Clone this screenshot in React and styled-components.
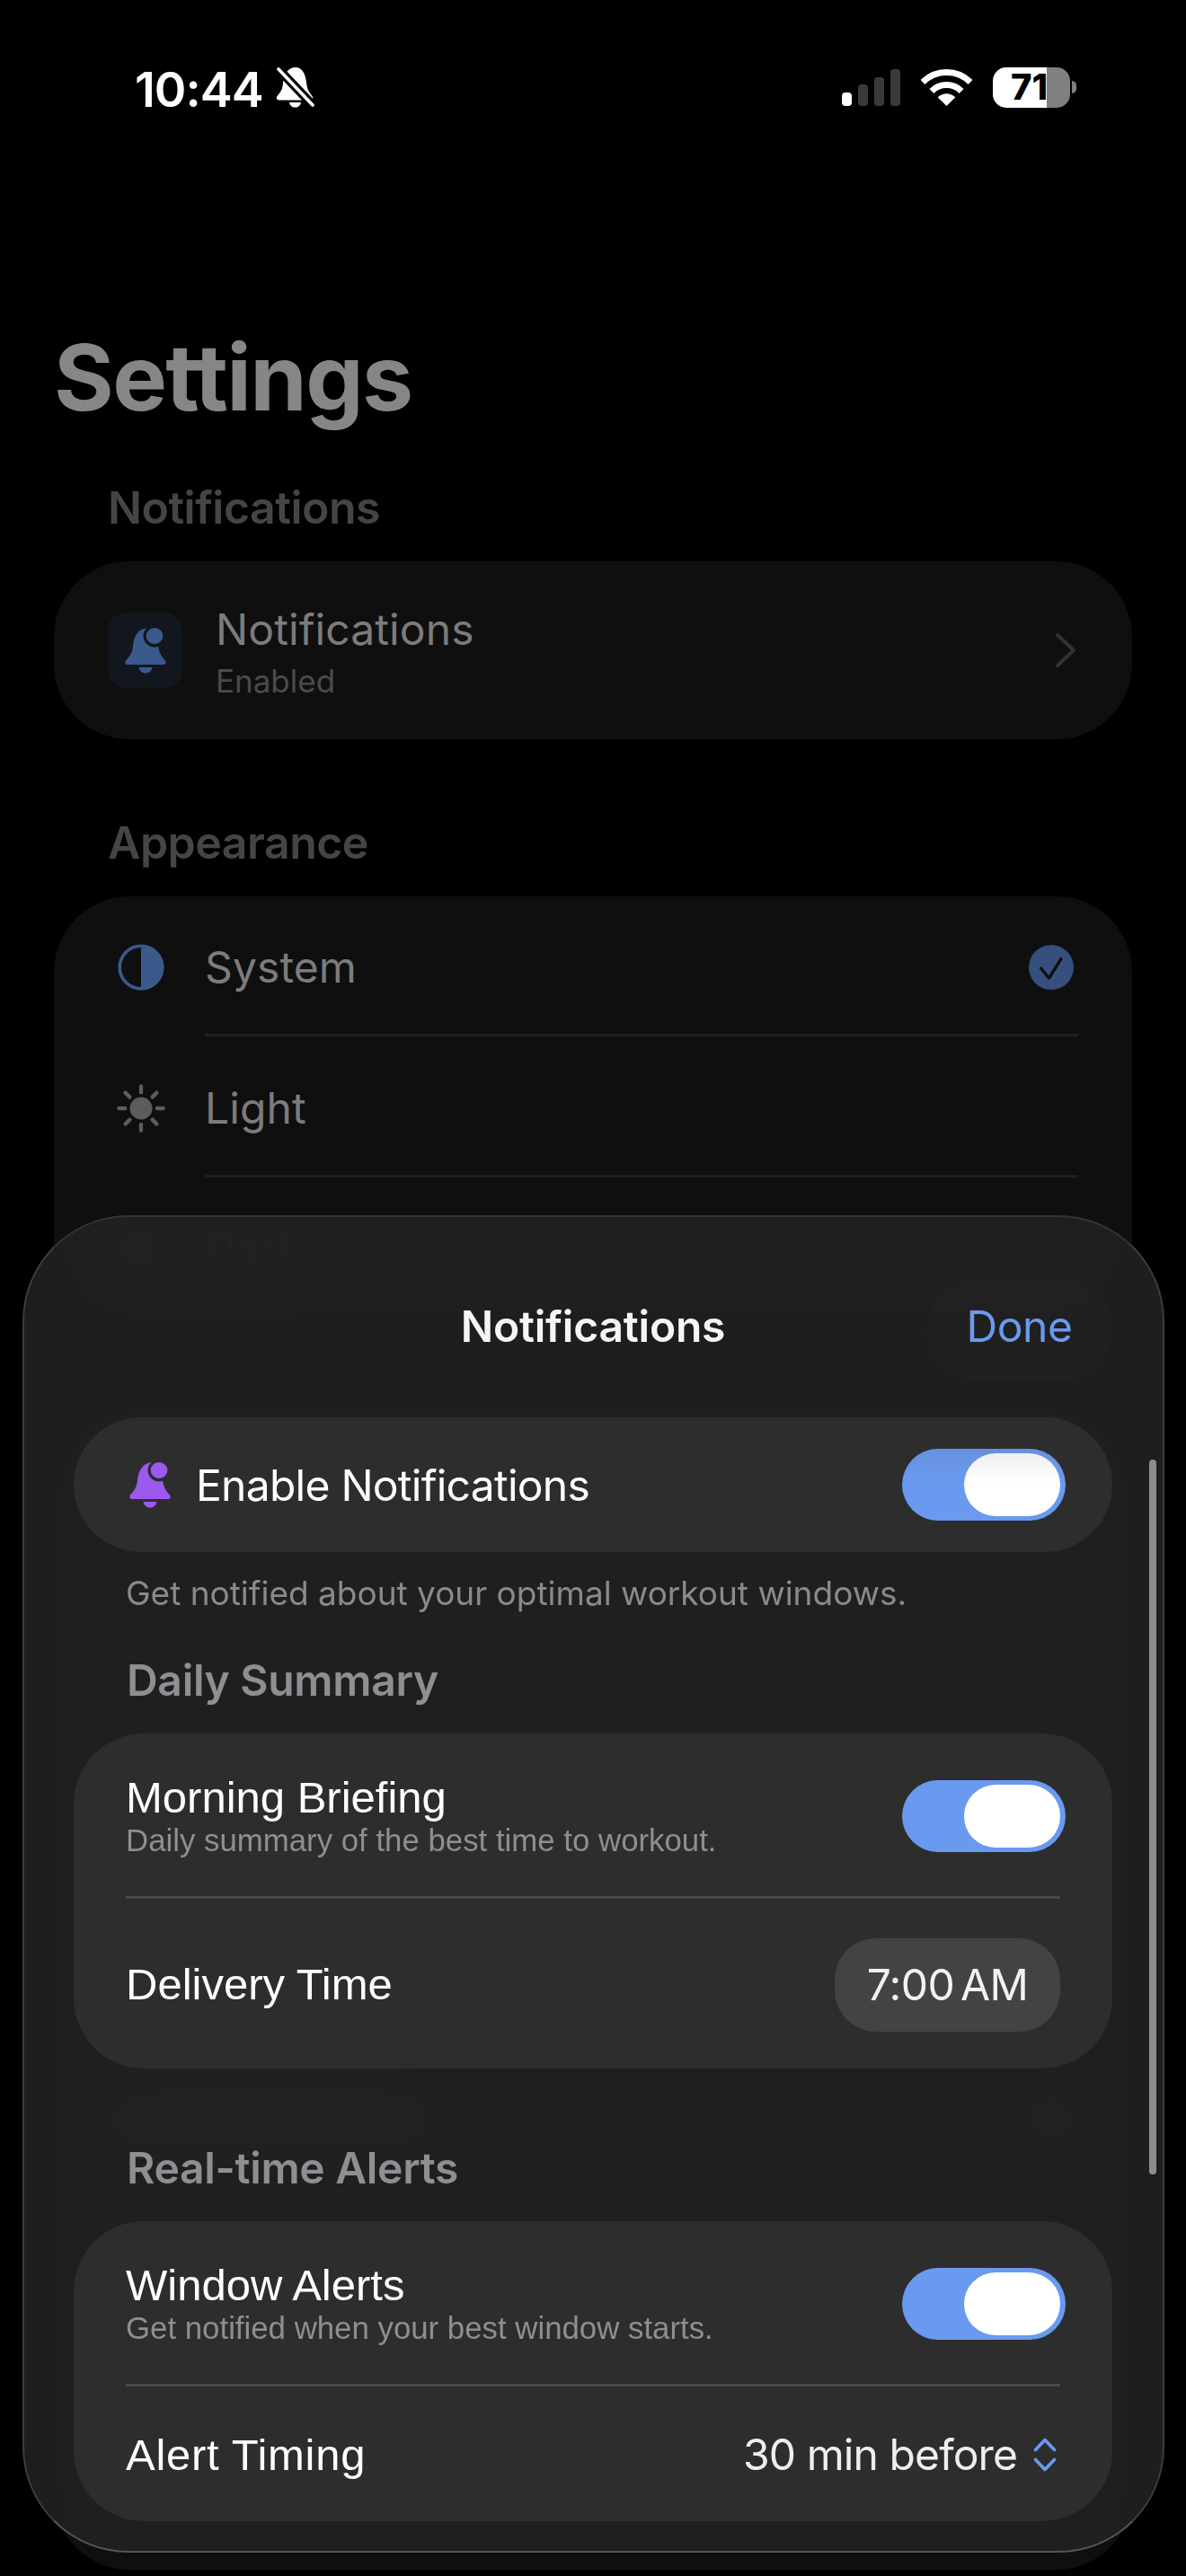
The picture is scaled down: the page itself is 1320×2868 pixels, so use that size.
import React from "react";
import styled, { createGlobalStyle } from "styled-components";

const Global = createGlobalStyle`
  html, body { margin: 0; padding: 0; background: #000; }
  * { box-sizing: border-box; }
  body { font-family: Inter, "Noto Sans", sans-serif; }
`;

const Page = styled.div`
  position: relative;
  width: 1320px;
  height: 2868px;
  overflow: hidden;
  background: #000;
  padding-top: 74px;
`;

const StatusBar = styled.div`
  display: flex;
  justify-content: space-between;
  align-items: center;
  height: 46px;
  padding: 0 122px 0 150px;
`;
const StatusLeft = styled.div`
  display: flex;
  align-items: center;
  gap: 14px;
`;
const Clock = styled.span`
  color: #fff;
  font: 600 54px/1 Inter, sans-serif;
  letter-spacing: -1px;
  margin-top: 5px;
`;
const StatusRight = styled.div`
  display: flex;
  align-items: center;
  gap: 23px;
`;
const Signal = styled.div`
  display: flex;
  align-items: flex-end;
  gap: 7px;
  height: 41px;
`;
const SignalBar = styled.span`
  width: 11px;
  height: ${(p) => p.$h}px;
  border-radius: 4px;
  background: ${(p) => (p.$on ? "#fff" : "#3a3a3a")};
`;
const BatteryWrap = styled.div`
  display: flex;
  align-items: center;
  gap: 2px;
`;
const Battery = styled.div`
  width: 86px;
  height: 45px;
  border-radius: 15px;
  background: linear-gradient(90deg, #fff 70%, #808080 70%);
  display: flex;
  align-items: center;
  justify-content: center;
  color: #000;
  font: 800 40px/1 Inter, sans-serif;
  padding-right: 5px;
`;
const BatteryNub = styled.span`
  width: 5px;
  height: 14px;
  border-radius: 0 6px 6px 0;
  background: #808080;
`;

const LargeTitle = styled.h1`
  margin: 249px 0 0 60px;
  color: #868686;
  font: 700 102px/1 Inter, sans-serif;
  letter-spacing: -1.6px;
`;
const BackSectionTitle = styled.h2`
  margin: ${(p) => p.$top}px 0 35px 120px;
  color: #454545;
  font: 600 50px/1 Inter, sans-serif;
  letter-spacing: -0.5px;
`;
const BackCard = styled.div`
  margin: 0 60px;
  background: #0f0f0f;
  border-radius: 84px;
`;
const NotifRow = styled.div`
  display: flex;
  align-items: center;
  height: 198px;
  padding: 0 62px 0 60px;
`;
const IconTile = styled.div`
  width: 83px;
  height: 84px;
  border-radius: 20px;
  background: #12161d;
  display: flex;
  align-items: center;
  justify-content: center;
`;
const NotifText = styled.div`
  flex: 1;
  margin-left: 37px;
  padding-top: 4px;
  display: flex;
  flex-direction: column;
  gap: 16px;
`;
const BackLabel = styled.div`
  color: #7c7c7c;
  font: 400 48px/1 Inter, sans-serif;
  letter-spacing: 0.1px;
`;
const BackSub = styled.div`
  color: #4b4b4b;
  font: 400 35px/1 Inter, sans-serif;
`;
const OptionList = styled.div`
  padding-top: 4px;
  padding-bottom: 6px;
`;
const OptionRow = styled.div`
  display: flex;
  align-items: center;
  height: 149px;
  padding-left: 70px;
  padding-right: 65px;
`;
const OptionIcon = styled.div`
  width: 54px;
  display: flex;
  justify-content: center;
`;
const OptionLabel = styled(BackLabel)`
  flex: 1;
  margin-left: 44px;
`;
const OptionDivider = styled.div`
  height: 3px;
  margin: 0 60px 5px 168px;
  background: #1f1f1f;
`;
const GhostCard = styled(BackCard)`
  margin-top: 90px;
  height: 1300px;
  padding: 773px 65px 0 50px;
  display: flex;
  justify-content: space-between;
  align-items: flex-start;
`;
const GhostBar = styled.div`
  width: 380px;
  height: 40px;
  margin-top: 5px;
  border-radius: 20px;
  background: #3c3c3c;
`;

const Sheet = styled.section`
  position: absolute;
  left: 25px;
  top: 1353px;
  width: 1271px;
  height: 1489px;
  overflow: hidden;
  border-radius: 118px;
  border: 2px solid #3d3d3d;
  border-top-color: #343434;
  border-bottom-color: #565656;
  background: rgba(33, 33, 33, 0.9);
  backdrop-filter: blur(30px);
  padding: 68px 56px 0 55px;
`;
const SheetHeader = styled.header`
  display: grid;
  grid-template-columns: 1fr auto 1fr;
  align-items: center;
  height: 114px;
`;
const SheetTitle = styled.h2`
  grid-column: 2;
  margin: 0;
  padding-bottom: 7px;
  color: #f5f5f5;
  font: 600 48px/1 Inter, sans-serif;
  letter-spacing: -0.2px;
`;
const DoneButton = styled.button`
  grid-column: 3;
  justify-self: end;
  width: 207px;
  height: 114px;
  border: 0;
  border-radius: 57px;
  background: rgba(255, 255, 255, 0.012);
  color: #6a9aef;
  font: 400 48px/1 Inter, sans-serif;
  letter-spacing: -0.4px;
  padding: 0 0 7px;
`;
const EnableCard = styled.div`
  display: flex;
  align-items: center;
  height: 150px;
  margin-top: 41px;
  border-radius: 75px;
  background: #2d2d2d;
  padding: 0 52px 0 62px;
`;
const EnableLabel = styled.div`
  flex: 1;
  margin-left: 28px;
  padding-top: 2px;
  color: #fff;
  font: 400 48px/1 Inter, sans-serif;
  letter-spacing: -0.75px;
`;
const Caption = styled.p`
  margin: 27px 0 0 58px;
  color: #8a8a8e;
  font: 400 37px/1 Inter, sans-serif;
`;
const GroupTitle = styled.h3`
  margin: ${(p) => p.$top}px 0 35px 59px;
  color: #8e8e93;
  font: 600 48px/1 Inter, sans-serif;
  letter-spacing: -0.3px;
`;
const GroupCard = styled.div`
  border-radius: 78px;
  background: #2d2d2d;
`;
const ToggleRow = styled.div`
  display: flex;
  align-items: center;
  justify-content: space-between;
  height: 181px;
  padding: 3px 52px 0 58px;
`;
const RowText = styled.div`
  display: flex;
  flex-direction: column;
  gap: 6px;
`;
const RowTitle = styled.div`
  color: #fff;
  font: 400 49px/1 "Liberation Sans", Arial, sans-serif;
`;
const WideRowTitle = styled(RowTitle)`
  letter-spacing: 0.7px;
`;
const RowSub = styled.div`
  color: #8e8e93;
  font: 400 34.8px/1 "Liberation Sans", Arial, sans-serif;
`;
const GroupDivider = styled.div`
  height: 3px;
  margin: 0 58px;
  background: #4a4a4a;
`;
const ValueRow = styled.div`
  display: flex;
  align-items: center;
  justify-content: space-between;
  height: ${(p) => p.$h}px;
  padding: 2px ${(p) => p.$right}px 0 58px;
`;
const TimePill = styled.div`
  width: 251px;
  height: 104px;
  border-radius: 46px;
  background: #434343;
  display: flex;
  align-items: center;
  justify-content: center;
  color: #f2f2f2;
  font: 400 48px/1 Inter, sans-serif;
  letter-spacing: -0.6px;
  word-spacing: -6px;
`;
const PickerValue = styled.div`
  display: flex;
  align-items: center;
  gap: 18px;
  color: #eee;
  font: 400 48px/1 Inter, sans-serif;
  letter-spacing: -0.9px;
`;
const Track = styled.div`
  width: 182px;
  height: 80px;
  border-radius: 40px;
  background: ${(p) => (p.$dim ? "linear-gradient(#6690de, #6a9aef 45%)" : "#6a9aef")};
  display: flex;
  justify-content: flex-end;
  align-items: center;
  padding-right: 6px;
`;
const Thumb = styled.div`
  width: 107px;
  height: 70px;
  border-radius: 35px;
  background: ${(p) => (p.$dim ? "linear-gradient(#f0f0f0, #fff 50%)" : "#fff")};
`;
const ScrollBar = styled.div`
  position: absolute;
  right: 7px;
  top: 270px;
  width: 8px;
  height: 796px;
  border-radius: 4px;
  background: #8c8c8c;
`;

const Toggle = ({ dim }) => (
  <Track $dim={dim}>
    <Thumb $dim={dim} />
  </Track>
);

const BadgeBell = ({ color, id, width = 46, height = 52 }) => (
  <svg width={width} height={height} viewBox="0 0 46 52">
    <mask id={id}>
      <rect width="46" height="52" fill="#fff" />
      <circle cx="33" cy="10" r="12.5" fill="#000" />
    </mask>
    <path
      mask={`url(#${id})`}
      fill={color}
      d="M25 1C15 2 10 10 9 21C8.4 29 5 33 1 37.5C-.6 39.6.6 42 3.5 42H42.5C45.4 42 46.6 39.6 45 37.5C41 33 38 29 37 21C36 10 32 1 25 1Z"
    />
    <path fill={color} d="M15.5 45H30.5C29.8 49 26.8 51.5 23 51.5C19.2 51.5 16.2 49 15.5 45Z" />
    <ellipse cx="33" cy="10" rx="9.4" ry="9" fill={color} />
  </svg>
);

const MutedBell = () => (
  <svg width="43" height="46" viewBox="0 0 43 46">
    <path
      fill="#fff"
      d="M22 1C14 1 9 8 8 18C7.5 26 5 29 1.5 33C0 35 1 37.5 4 37.5H38C41 37.5 42 35 40.5 33C37 29 35 26 34 18C33 8 29 1 22 1Z"
    />
    <path fill="#fff" d="M15 40H28C27.4 43.5 25 45.5 21.5 45.5C18 45.5 15.6 43.5 15 40Z" />
    <path d="M3 3L41 43" stroke="#000" strokeWidth="10" />
    <path d="M3 3L41 43" stroke="#fff" strokeWidth="3.6" strokeLinecap="round" />
  </svg>
);

const Wifi = () => (
  <svg width="57" height="41" viewBox="0 0 57 41" fill="none" stroke="#fff" strokeWidth="7">
    <path d="M2 14.5A37.5 37.5 0 0 1 55 14.5" />
    <path d="M11.9 24.4A23.5 23.5 0 0 1 45.1 24.4" />
    <path fill="#fff" stroke="none" d="M28.5 41L18.6 31.2Q28.5 23.2 38.4 31.2Z" />
  </svg>
);

const Chevron = () => (
  <svg width="24" height="38" viewBox="0 0 24 38" fill="none" stroke="#333" strokeWidth="4" strokeLinecap="round" strokeLinejoin="round">
    <path d="M3 2L21 19L3 36" />
  </svg>
);

const SystemIcon = () => (
  <svg width="52" height="52" viewBox="0 0 52 52">
    <circle cx="26" cy="26" r="23.8" fill="none" stroke="#3a5a8c" strokeWidth="3.6" />
    <path d="M26 2A24 24 0 0 1 26 50Z" fill="#3a5a8c" />
  </svg>
);

const SunIcon = () => {
  const rays = [0, 45, 90, 135, 180, 225, 270, 315];
  return (
    <svg width="56" height="56" viewBox="0 0 56 56">
      <circle cx="28" cy="28" r="13" fill="#5c5c5c" />
      {rays.map((a) => (
        <path key={a} d="M28 2.5V9.5" stroke="#5c5c5c" strokeWidth="4.5" strokeLinecap="round" transform={`rotate(${a} 28 28)`} />
      ))}
    </svg>
  );
};

const MoonIcon = () => (
  <svg width="50" height="50" viewBox="0 0 50 50">
    <path fill="#5c5c5c" d="M32 4A22 22 0 1 0 46 34A24 24 0 0 1 32 4Z" />
  </svg>
);

const CheckBadge = () => (
  <svg width="50" height="50" viewBox="0 0 50 50" fill="none">
    <circle cx="25" cy="25" r="25" fill="#35507f" />
    <path d="M13.5 26L22.5 37L36 15.5" stroke="#0f0f0f" strokeWidth="3.4" strokeLinecap="round" strokeLinejoin="round" />
  </svg>
);

const UpDown = () => (
  <svg width="26" height="38" viewBox="0 0 26 38" fill="none" stroke="#6a9aef" strokeWidth="3.6" strokeLinecap="round" strokeLinejoin="round">
    <path d="M2.5 13.5L13 2.5L23.5 13.5" />
    <path d="M2.5 24.5L13 35.5L23.5 24.5" />
  </svg>
);

export default function App() {
  return (
    <Page>
      <Global />
      <StatusBar>
        <StatusLeft>
          <Clock>10:44</Clock>
          <MutedBell />
        </StatusLeft>
        <StatusRight>
          <Signal>
            <SignalBar $h={15} $on />
            <SignalBar $h={24} />
            <SignalBar $h={32} />
            <SignalBar $h={41} />
          </Signal>
          <Wifi />
          <BatteryWrap>
            <Battery>71</Battery>
            <BatteryNub />
          </BatteryWrap>
        </StatusRight>
      </StatusBar>

      <LargeTitle>Settings</LargeTitle>

      <BackSectionTitle $top={69}>Notifications</BackSectionTitle>
      <BackCard>
        <NotifRow>
          <IconTile>
            <BadgeBell color="#3a5a8c" id="bell-back" />
          </IconTile>
          <NotifText>
            <BackLabel>Notifications</BackLabel>
            <BackSub>Enabled</BackSub>
          </NotifText>
          <Chevron />
        </NotifRow>
      </BackCard>

      <BackSectionTitle $top={90}>Appearance</BackSectionTitle>
      <BackCard>
        <OptionList>
          <OptionRow>
            <OptionIcon><SystemIcon /></OptionIcon>
            <OptionLabel>System</OptionLabel>
            <CheckBadge />
          </OptionRow>
          <OptionDivider />
          <OptionRow>
            <OptionIcon><SunIcon /></OptionIcon>
            <OptionLabel>Light</OptionLabel>
          </OptionRow>
          <OptionDivider />
          <OptionRow>
            <OptionIcon><MoonIcon /></OptionIcon>
            <OptionLabel>Dark</OptionLabel>
          </OptionRow>
        </OptionList>
      </BackCard>
      <GhostCard>
        <GhostBar />
        <CheckBadge />
      </GhostCard>

      <Sheet>
        <SheetHeader>
          <SheetTitle>Notifications</SheetTitle>
          <DoneButton>Done</DoneButton>
        </SheetHeader>

        <EnableCard>
          <BadgeBell color="#9b59ee" id="bell-front" />
          <EnableLabel>Enable Notifications</EnableLabel>
          <Toggle dim />
        </EnableCard>
        <Caption>Get notified about your optimal workout windows.</Caption>

        <GroupTitle $top={55}>Daily Summary</GroupTitle>
        <GroupCard>
          <ToggleRow>
            <RowText>
              <RowTitle>Morning Briefing</RowTitle>
              <RowSub>Daily summary of the best time to workout.</RowSub>
            </RowText>
            <Toggle />
          </ToggleRow>
          <GroupDivider />
          <ValueRow $h={189} $right={58}>
            <RowTitle>Delivery Time</RowTitle>
            <TimePill>7:00 AM</TimePill>
          </ValueRow>
        </GroupCard>

        <GroupTitle $top={87}>Real-time Alerts</GroupTitle>
        <GroupCard>
          <ToggleRow>
            <RowText>
              <RowTitle>Window Alerts</RowTitle>
              <RowSub>Get notified when your best window starts.</RowSub>
            </RowText>
            <Toggle />
          </ToggleRow>
          <GroupDivider />
          <ValueRow $h={150} $right={62}>
            <WideRowTitle>Alert Timing</WideRowTitle>
            <PickerValue>
              30 min before
              <UpDown />
            </PickerValue>
          </ValueRow>
        </GroupCard>

        <ScrollBar />
      </Sheet>
    </Page>
  );
}
